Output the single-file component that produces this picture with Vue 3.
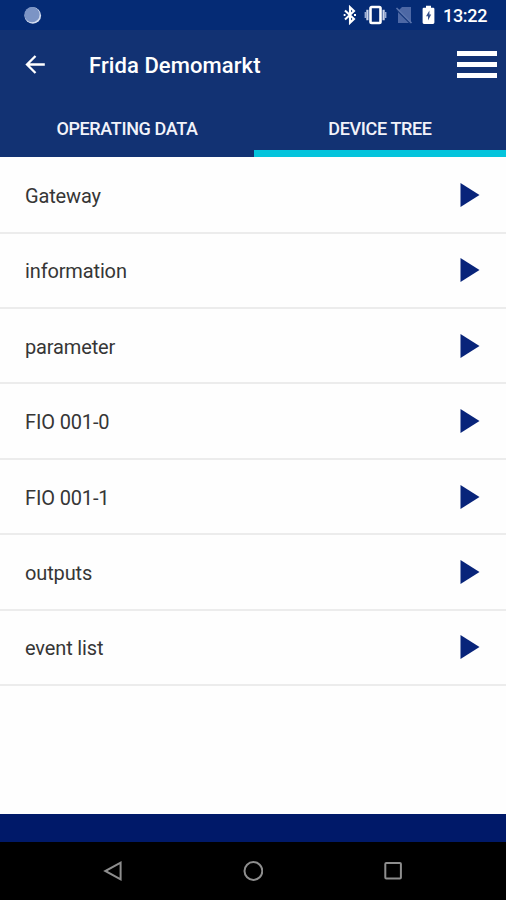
<script setup>
const rows = ['Gateway', 'information', 'parameter', 'FIO 001-0', 'FIO 001-1', 'outputs', 'event list']
</script>

<template>
  <div class="screen">
    <div class="status">
      <svg class="dot" viewBox="0 0 20 20"><circle cx="10.8" cy="10.5" r="8.3" fill="#d5def0" /><circle cx="10" cy="9.7" r="7.6" fill="#7c94c5" /></svg>
      <svg class="bt" viewBox="0 0 14 20" fill="none" stroke="#fff" stroke-width="2.1"><path d="M2 5.5L11 14L7 17.8V2.2L11 6L2 14.5" /><path d="M.7 10h1.8M11 10h2" /></svg>
      <svg class="vib" viewBox="0 0 24 20" fill="none" stroke="#fff"><rect x="6.5" y="2" width="10" height="16" rx="1.2" stroke-width="2.6" /><path d="M3.4 4.8v10.4M19.6 4.8v10.4" stroke-width="2.2" stroke="#c9d3ea" /><path d="M1.4 7v6M21.6 7v6" stroke-width="1.6" stroke="#9cadd3" /></svg>
      <svg class="sim" viewBox="0 0 18 20"><path d="M3 6l4-4h9v16H3z" fill="#4d68a5" /><path d="M2 5.2L15.5 18.7" stroke="#123479" stroke-width="1.3" /><path d="M1.5 3L16.5 18" stroke="#5a74ad" stroke-width="1.6" /></svg>
      <svg class="bat" viewBox="0 0 13 20"><path d="M4 .8h5v2h2.2q1.2 0 1.2 1.2v13.5q0 1.4-1.4 1.4H2q-1.4 0-1.4-1.4V4q0-1.2 1.2-1.2H4z" fill="#fff" /><path d="M7.4 5.5L4 11.2H6v4.2l3.2-5.8H7.4z" fill="#35508c" /></svg>
      <span class="time">13:22</span>
    </div>
    <header class="bar">
      <svg class="back" viewBox="0 0 22 20" fill="none" stroke="#fff" stroke-width="2.3"><path d="M20.8 9.5H2.5M11.5 1L3 9.5l8.5 8.5" /></svg>
      <h1>Frida Demomarkt</h1>
      <div class="menu"><i></i><i></i><i></i></div>
    </header>
    <nav class="tabs">
      <div class="tab"><span>OPERATING DATA</span></div>
      <div class="tab active"><span>DEVICE TREE</span></div>
    </nav>
    <main class="list">
      <div v-for="row in rows" :key="row" class="row">
        <span>{{ row }}</span>
        <svg viewBox="0 0 20 24"><path d="M.5 0L19.5 12L.5 24z" fill="#08247a" /></svg>
      </div>
    </main>
    <div class="strip"></div>
    <footer class="nav">
      <svg viewBox="0 0 20 20"><path d="M17.6 1.7v16.6L2.3 10z" /></svg>
      <svg viewBox="0 0 20 20"><circle cx="10.4" cy="10" r="8.9" /></svg>
      <svg viewBox="0 0 20 20"><rect x="2.3" y="2" width="15.6" height="15.6" rx="1" /></svg>
    </footer>
  </div>
</template>

<style>
body { background: #fff; }
</style>

<style scoped>
.screen { width: 506px; height: 900px; display: flex; flex-direction: column; font-family: Roboto, sans-serif; background: #fefefe; overflow: hidden; }
svg { display: block; flex: none; }
.status { height: 30px; background: #052b75; display: flex; align-items: center; box-sizing: border-box; padding: 0 0 0 22px; flex: none; }
.dot { width: 20px; height: 20px; }
.bt { width: 14px; height: 20px; margin-left: 301px; }
.vib { width: 24px; height: 20px; margin-left: 7px; }
.sim { width: 18px; height: 20px; margin-left: 7px; }
.bat { width: 13px; height: 20px; margin-left: 9px; }
.time { color: #fff; font-size: 18px; font-weight: 500; letter-spacing: -0.3px; line-height: 30px; margin: 2px 0 0 8px; }
.bar { height: 70px; background: #123273; display: flex; align-items: center; flex: none; }
.back { width: 22px; height: 20px; margin-left: 24px; }
h1 { margin: 2px 0 0 43px; color: #fff; font-size: 22px; font-weight: 500; line-height: 30px; letter-spacing: 0.08px; white-space: nowrap; }
.menu { display: flex; flex-direction: column; gap: 6px; margin: -1px 9px 0 auto; }
.menu i { width: 40px; height: 5px; background: #fff; }
.tabs { height: 57px; background: #123273; display: grid; grid-template-columns: 254px 252px; flex: none; }
.tab { display: flex; align-items: center; justify-content: center; color: #f2f3fa; font-size: 18px; font-weight: 500; letter-spacing: -0.36px; line-height: 24px; box-sizing: border-box; border-bottom: 7px solid transparent; padding-top: 8px; white-space: nowrap; }
.active { border-bottom-color: #04c4dc; }
.list { flex: 1; padding-top: 1.2px; }
.row { height: 75.42px; box-sizing: border-box; border-bottom: 2px solid #ececec; display: flex; align-items: center; justify-content: space-between; padding: 0 26px 0 25px; color: #363636; font-size: 20px; line-height: 28px; }
.row span { letter-spacing: -0.14px; padding-top: 2px; }
.row svg { width: 20px; height: 24px; }
.strip { height: 28px; background: #001969; flex: none; }
.nav { height: 58px; background: #000; display: flex; justify-content: center; align-items: center; gap: 120px; flex: none; }
.nav svg { width: 20px; height: 20px; fill: none; stroke: #8e8e8e; stroke-width: 2; }
</style>
